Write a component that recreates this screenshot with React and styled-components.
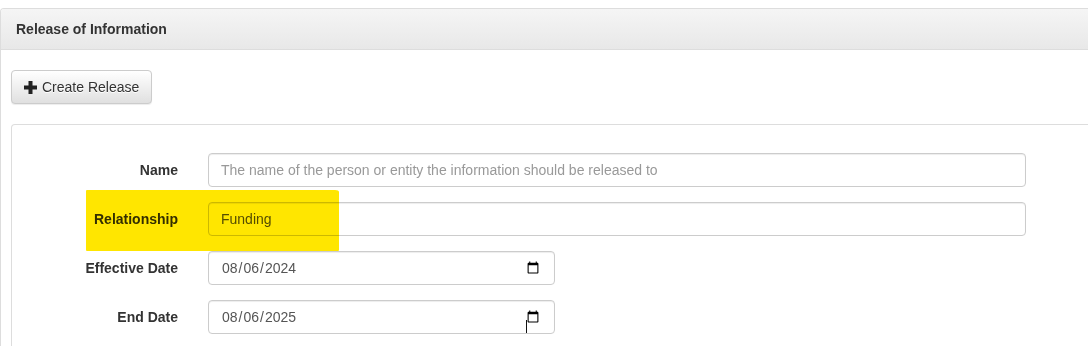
import styled, { createGlobalStyle } from "styled-components";

const GlobalStyle = createGlobalStyle`
  html, body {
    margin: 0;
    padding: 0;
    background: #fff;
    overflow: hidden;
  }
  body {
    padding-top: 8px;
    font-family: "Liberation Sans", Arial, sans-serif;
    font-size: 14px;
    color: #333;
  }
`;

const Panel = styled.section`
  width: 1110px;
  border: 1px solid #ddd;
  border-bottom: none;
  border-radius: 4px 4px 0 0;
  background: #fff;
`;

const PanelHeading = styled.div`
  padding: 10px 15px;
  line-height: 20px;
  font-size: 14px;
  font-weight: bold;
  color: #333;
  background-image: linear-gradient(to bottom, #f5f5f5 0%, #e8e8e8 100%);
  border-bottom: 1px solid #ddd;
  border-radius: 3px 3px 0 0;
`;

const PanelBody = styled.div`
  padding: 20px 10px 0 10px;
`;

const Button = styled.button`
  display: inline-flex;
  align-items: center;
  gap: 5px;
  height: 34px;
  padding: 6px 12px;
  font-family: inherit;
  font-size: 14px;
  line-height: 20px;
  color: #333;
  text-shadow: 0 1px 0 #fff;
  background-image: linear-gradient(to bottom, #fff 0%, #e0e0e0 100%);
  border: 1px solid #ccc;
  border-radius: 4px;
  box-shadow: inset 0 1px 0 rgba(255, 255, 255, 0.15), 0 1px 1px rgba(0, 0, 0, 0.075);
  cursor: pointer;
`;

const Well = styled.div`
  margin-top: 20px;
  border: 1px solid #ddd;
  border-bottom: none;
  border-radius: 4px 0 0 0;
  padding: 28px 0 14px 0;
`;

const Form = styled.div`
  display: grid;
  grid-template-columns: 166px 1fr;
  column-gap: 30px;
  row-gap: 15px;
  align-items: center;
`;

const Label = styled.label`
  text-align: right;
  font-weight: bold;
  font-size: 14px;
  color: #333;
`;

const Input = styled.input`
  box-sizing: border-box;
  width: ${(p) => p.$width}px;
  height: 34px;
  padding: 6px 12px;
  font-family: "Liberation Sans", Arial, sans-serif;
  font-size: 14px;
  color: #555;
  background: #fff;
  border: 1px solid #ccc;
  border-radius: 4px;
  box-shadow: inset 0 1px 1px rgba(0, 0, 0, 0.075);
  outline: none;

  &::placeholder {
    color: #999;
  }
`;

const Field = styled.div`
  position: relative;
  height: 34px;
`;

/* marker highlight drawn over the relationship row */
const Highlight = styled.div`
  position: absolute;
  left: -122px;
  top: -12px;
  width: 253px;
  height: 61px;
  background: #ffe600;
  mix-blend-mode: multiply;
  border-radius: 1px 4px 1px 1px / 1px 2px 1px 1px;
  pointer-events: none;
`;

const Cursor = styled.div`
  position: absolute;
  left: 318px;
  top: 20px;
  width: 1px;
  height: 13px;
  background: #111;
`;

function PlusIcon() {
  return (
    <svg width="13" height="13" viewBox="0 0 13 13" aria-hidden="true">
      <rect x="4.5" y="0" width="4" height="13" fill="#222" />
      <rect x="0" y="4.5" width="13" height="4" fill="#222" />
    </svg>
  );
}

export default function App() {
  return (
    <>
      <GlobalStyle />
      <Panel>
        <PanelHeading>Release of Information</PanelHeading>
        <PanelBody>
          <Button>
            <PlusIcon />
            Create Release
          </Button>
          <Well>
            <Form>
              <Label>Name</Label>
              <Field>
                <Input
                  $width={818}
                  placeholder="The name of the person or entity the information should be released to"
                />
              </Field>

              <Label>Relationship</Label>
              <Field>
                <Input $width={818} defaultValue="Funding" />
                <Highlight />
              </Field>

              <Label>Effective Date</Label>
              <Field>
                <Input $width={347} type="date" defaultValue="2024-08-06" />
              </Field>

              <Label>End Date</Label>
              <Field>
                <Input $width={347} type="date" defaultValue="2025-08-06" />
                <Cursor />
              </Field>
            </Form>
          </Well>
        </PanelBody>
      </Panel>
    </>
  );
}
